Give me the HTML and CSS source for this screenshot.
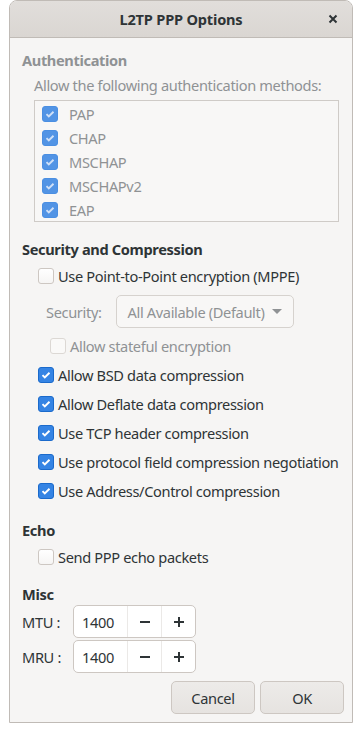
FILE: index.html
```html
<!DOCTYPE html>
<html lang="en">
<head>
  <meta charset="UTF-8">
  <title>L2TP PPP Options</title>
  <link rel="stylesheet" href="styles.css">
</head>
<body>
  <div class="window">
    <header class="titlebar">
      <span class="title">L2TP PPP Options</span>
      <svg class="close" width="10" height="10" viewBox="0 0 10 10"><path d="M1.5 1.5l7 7M8.5 1.5l-7 7" stroke="#2e3436" stroke-width="2"/></svg>
    </header>

    <main class="content">
      <div class="heading disabled">Authentication</div>
      <div class="hint">Allow the following authentication methods:</div>
      <div class="listbox">
        <div class="row"><span class="check on dim"></span><span>PAP</span></div>
        <div class="row"><span class="check on dim"></span><span>CHAP</span></div>
        <div class="row"><span class="check on dim"></span><span>MSCHAP</span></div>
        <div class="row"><span class="check on dim"></span><span>MSCHAPv2</span></div>
        <div class="row"><span class="check on dim"></span><span>EAP</span></div>
      </div>

      <div class="heading sec">Security and Compression</div>
      <div class="opt"><span class="check"></span><span>Use Point-to-Point encryption (MPPE)</span></div>
      <div class="security">
        <span class="sec-label">Security:</span>
        <span class="combo">All Available (Default)<span class="arrow"></span></span>
      </div>
      <div class="opt sub"><span class="check off-dim"></span><span>Allow stateful encryption</span></div>
      <div class="opt"><span class="check on"></span><span>Allow BSD data compression</span></div>
      <div class="opt"><span class="check on"></span><span>Allow Deflate data compression</span></div>
      <div class="opt"><span class="check on"></span><span>Use TCP header compression</span></div>
      <div class="opt"><span class="check on"></span><span>Use protocol field compression negotiation</span></div>
      <div class="opt"><span class="check on"></span><span>Use Address/Control compression</span></div>

      <div class="heading echo">Echo</div>
      <div class="opt"><span class="check"></span><span>Send PPP echo packets</span></div>

      <div class="heading misc">Misc</div>
      <div class="spins">
        <div class="spinrow">
          <span class="spin-label">MTU :</span>
          <div class="spin">
            <span class="val">1400</span>
            <span class="btn"><svg width="12" height="12" viewBox="0 0 12 12"><path d="M1 6h10" stroke="#2e3436" stroke-width="2"/></svg></span>
            <span class="btn"><svg width="12" height="12" viewBox="0 0 12 12"><path d="M1 6h10M6 1v10" stroke="#2e3436" stroke-width="2"/></svg></span>
          </div>
        </div>
        <div class="spinrow">
          <span class="spin-label">MRU :</span>
          <div class="spin">
            <span class="val">1400</span>
            <span class="btn"><svg width="12" height="12" viewBox="0 0 12 12"><path d="M1 6h10" stroke="#2e3436" stroke-width="2"/></svg></span>
            <span class="btn"><svg width="12" height="12" viewBox="0 0 12 12"><path d="M1 6h10M6 1v10" stroke="#2e3436" stroke-width="2"/></svg></span>
          </div>
        </div>
      </div>

      <div class="actions">
        <button class="button">Cancel</button>
        <button class="button">OK</button>
      </div>
    </main>
  </div>
</body>
</html>
```

FILE: styles.css
```css
* {
  box-sizing: border-box;
}
body {
  margin: 0;
  background: #ffffff;
  font-family: "Noto Sans", sans-serif;
  font-size: 14.6px;
  letter-spacing: -0.35px;
  color: #2e3436;
}
.window {
  margin-left: 9px;
  width: 344px;
  height: 723px;
  border: 1px solid #c0bbb6;
  border-radius: 8px 8px 0 0;
  background: #f6f5f4;
  overflow: hidden;
}
.titlebar {
  height: 37px;
  border-bottom: 1px solid #c0bbb6;
  background: linear-gradient(#e1dedb, #dad6d2);
  display: flex;
  align-items: center;
  justify-content: center;
  position: relative;
}
.title {
  font-weight: bold;
  letter-spacing: -0.2px;
}
.close {
  position: absolute;
  right: 14px;
  top: 13px;
}
.content {
  padding: 12px 8px 0 12px;
  display: flex;
  flex-direction: column;
  white-space: nowrap;
}
.heading {
  font-weight: bold;
  line-height: 20px;
}
.disabled {
  color: #8f9294;
}
.hint {
  margin: 5px 0 0 12px;
  line-height: 20px;
  color: #8f9294;
}
.listbox {
  margin: 5px 0 0 12px;
  width: 305px;
  height: 122px;
  border: 1px solid #cfcbc7;
  background: #f8f7f6;
  padding-top: 1px;
  overflow: hidden;
}
.row {
  height: 24px;
  display: flex;
  align-items: center;
  gap: 11px;
  padding-left: 7px;
  color: #8f9294;
}
.check {
  width: 16px;
  height: 16px;
  flex: none;
  border: 1px solid #cdc7c2;
  border-radius: 3px;
  background: linear-gradient(#ffffff, #f6f5f4);
}
.check.on {
  border-color: #1b6acb;
  background: #3584e4 url("data:image/svg+xml,%3Csvg xmlns='http://www.w3.org/2000/svg' viewBox='0 0 16 16'%3E%3Cpath d='M4 8.2l2.6 2.6L12 5.4' fill='none' stroke='white' stroke-width='2.2'/%3E%3C/svg%3E") center/14px no-repeat;
}
.check.on.dim {
  border-color: #4b8fe2;
  background-color: #5294e5;
  background-image: url("data:image/svg+xml,%3Csvg xmlns='http://www.w3.org/2000/svg' viewBox='0 0 16 16'%3E%3Cpath d='M4 8.2l2.6 2.6L12 5.4' fill='none' stroke='%23cfe0f7' stroke-width='2.2'/%3E%3C/svg%3E");
}
.check.off-dim {
  border-color: #dcd8d4;
  background: #faf9f8;
}
.heading.sec {
  margin-top: 17px;
}
.opt {
  height: 29px;
  display: flex;
  align-items: center;
  gap: 4px;
  padding-left: 16px;
}
.heading.sec + .opt {
  margin-top: 2px;
}
.security {
  margin-top: 5px;
  height: 33px;
  display: flex;
  align-items: center;
  padding-left: 24px;
  gap: 14px;
}
.sec-label {
  color: #8f9294;
}
.combo {
  width: 178px;
  height: 33px;
  border: 1px solid #d6d2ce;
  border-radius: 5px;
  background: #f8f7f6;
  color: #8f9294;
  display: flex;
  align-items: center;
  padding-left: 11px;
  gap: 8px;
}
.arrow {
  width: 0;
  height: 0;
  border-left: 5px solid transparent;
  border-right: 5px solid transparent;
  border-top: 5px solid #8f9294;
}
.opt.sub {
  margin-top: 3px;
  padding-left: 28px;
  color: #8f9294;
}
.heading.echo {
  margin-top: 15px;
}
.heading.echo + .opt {
  margin-top: 2px;
}
.heading.misc {
  margin-top: 13px;
}
.spins {
  display: flex;
  flex-direction: column;
  gap: 2px;
  margin-top: 1px;
}
.spinrow {
  display: flex;
  align-items: center;
  height: 33px;
}
.spin-label {
  width: 51px;
}
.spin {
  display: flex;
  height: 33px;
  width: 123px;
  border: 1px solid #cdc7c2;
  border-radius: 5px;
  background: #ffffff;
}
.val {
  width: 53px;
  display: flex;
  align-items: center;
  padding-left: 8px;
}
.btn {
  flex: 1;
  border-left: 1px solid #ebe9e7;
  display: flex;
  align-items: center;
  justify-content: center;
}
.actions {
  margin-top: 8px;
  display: flex;
  justify-content: flex-end;
  gap: 5px;
}
.button {
  width: 84px;
  height: 33px;
  font: inherit;
  letter-spacing: inherit;
  color: #2e3436;
  border: 1px solid #cdc7c2;
  border-radius: 5px;
  background: linear-gradient(#edebe9, #e6e3e0);
}
```
